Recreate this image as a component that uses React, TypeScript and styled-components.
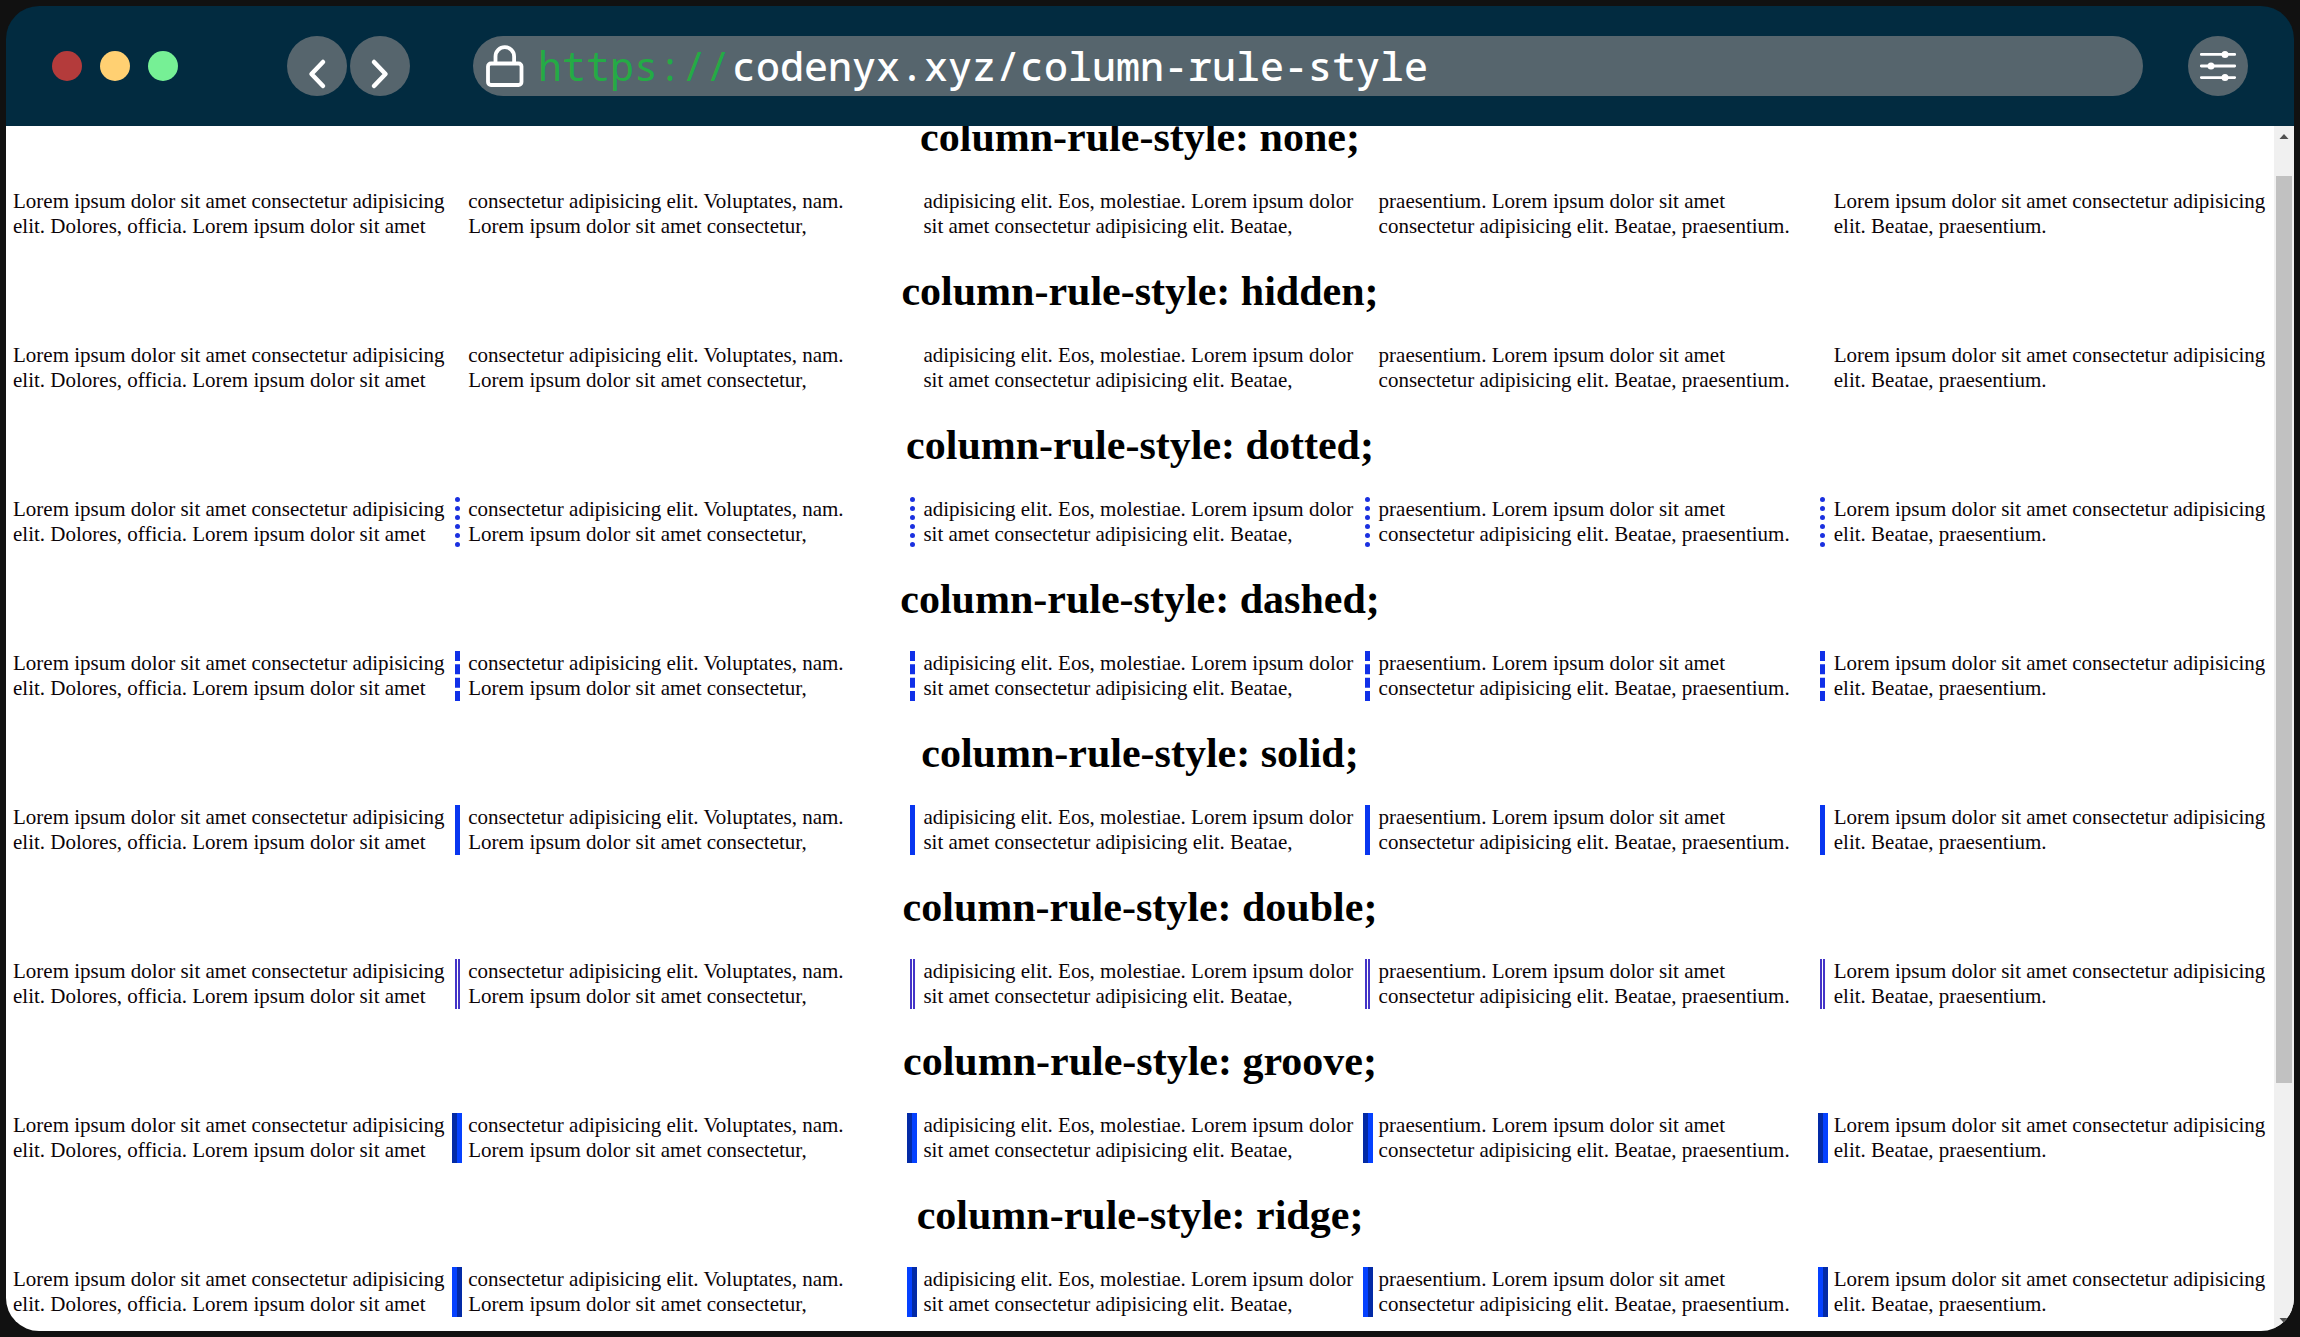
import React from "react";
import styled, { createGlobalStyle } from "styled-components";

const GlobalStyle = createGlobalStyle`
  *, *::before, *::after { box-sizing: border-box; }
  body { margin: 0; background: #111111; }
`;

const Shell = styled.div`
  height: 100vh;
  padding: 6px;
  background: #111111;
`;

const BrowserWindow = styled.div`
  display: flex;
  flex-direction: column;
  height: 100%;
`;

const Toolbar = styled.header`
  display: flex;
  align-items: center;
  flex: none;
  padding: 30px 46px;
  border-radius: 33px 33px 0 0;
  background: #022b40;
`;

const WindowControls = styled.div`
  display: flex;
  gap: 18px;
  margin-right: 109px;
`;

const WindowDot = styled.button<{ $color: string }>`
  width: 30px;
  height: 30px;
  padding: 0;
  border: 0;
  border-radius: 50%;
  background: ${({ $color }) => $color};
`;

const Navigation = styled.nav`
  display: flex;
  gap: 3px;
  margin-right: 63px;
`;

const RoundButton = styled.button`
  display: block;
  flex: none;
  width: 60px;
  height: 60px;
  padding: 0;
  border: 0;
  border-radius: 50%;
  background: #56656d;
  color: #ffffff;

  svg { display: block; }
`;

const AddressBar = styled.form`
  display: flex;
  align-items: center;
  flex: 1;
  min-width: 0;
  height: 60px;
  margin-right: 45px;
  padding: 0 30px 0 12px;
  border-radius: 30px;
  background: #56656d;
  font: 40px/60px "Noto Sans Mono", "DejaVu Sans Mono", monospace;
`;

const LockIcon = styled.svg`
  flex: none;
  margin-right: 13px;
`;

const Scheme = styled.label`
  color: #24ab45;
`;

const AddressInput = styled.input`
  flex: 1;
  min-width: 0;
  height: 60px;
  padding: 0 0 0 2px;
  border: 0;
  outline: 0;
  background: transparent;
  color: #ffffff;
  font: inherit;
  font-weight: 500;
`;

const Viewport = styled.div`
  display: flex;
  flex: 1;
  min-height: 0;
  overflow: hidden;
  border-radius: 0 0 33px 33px;
  background: #ffffff;
`;

const Page = styled.main`
  flex: 1;
  min-width: 0;
  overflow: hidden;
  padding: 0 7px;
  color: #0c0408;
  font: 21px/25px "Liberation Serif", "Times New Roman", serif;
`;

const Scrolled = styled.div`
  display: flow-root;
  margin-top: -41px;
`;

const Title = styled.h1`
  margin: 28px 0;
  color: #000000;
  font-size: 42px;
  line-height: 48px;
  text-align: center;
`;

const Columns = styled.div<{ $rule: string; $width: number; $color: string }>`
  column-count: 5;
  column-gap: 22px;
  column-rule: ${({ $width, $rule, $color }) => `${$width}px ${$rule} ${$color}`};
`;

const Scrollbar = styled.div`
  display: flex;
  flex-direction: column;
  flex: none;
  width: 20px;
  background: #f0f0f0;
`;

const ScrollButton = styled.button`
  flex: none;
  width: 20px;
  height: 20px;
  padding: 0;
  border: 0;
  background: transparent;
  color: #505050;

  svg { display: block; }
`;

const ScrollTrack = styled.div`
  display: grid;
  flex: 1;
  grid-template-rows: 30fr 907fr 228fr;
  padding: 0 2px;
`;

const ScrollThumb = styled.div`
  grid-row: 2;
  background: #c1c1c1;
`;

const samples = [
  { style: "none", width: 5, color: "#1a30e0" },
  { style: "hidden", width: 5, color: "#1a30e0" },
  { style: "dotted", width: 5, color: "#1a30e0" },
  { style: "dashed", width: 5, color: "#1030e8" },
  { style: "solid", width: 5, color: "#0836f0" },
  { style: "double", width: 5, color: "#4434c8" },
  { style: "groove", width: 10, color: "#0540fa" },
  { style: "ridge", width: 10, color: "#0540fa" },
];

const filler =
  "Lorem ipsum dolor sit amet consectetur adipisicing elit. Dolores, officia. " +
  "Lorem ipsum dolor sit amet consectetur adipisicing elit. Voluptates, nam. " +
  "Lorem ipsum dolor sit amet consectetur, adipisicing elit. Eos, molestiae. " +
  "Lorem ipsum dolor sit amet consectetur adipisicing elit. Beatae, praesentium. " +
  "Lorem ipsum dolor sit amet consectetur adipisicing elit. Beatae, praesentium. " +
  "Lorem ipsum dolor sit amet consectetur adipisicing elit. Beatae, praesentium.";

function Chevron({ points }: { points: string }) {
  return (
    <svg width="60" height="60" viewBox="0 0 60 60" fill="none" aria-hidden="true">
      <polyline
        points={points}
        stroke="currentColor"
        strokeWidth="4.5"
        strokeLinecap="round"
        strokeLinejoin="round"
      />
    </svg>
  );
}

export default function App() {
  return (
    <Shell>
      <GlobalStyle />
      <BrowserWindow>
        <Toolbar>
          <WindowControls>
            <WindowDot $color="#b43b3b" aria-label="Close" />
            <WindowDot $color="#ffd072" aria-label="Minimize" />
            <WindowDot $color="#76f095" aria-label="Maximize" />
          </WindowControls>
          <Navigation>
            <RoundButton aria-label="Back">
              <Chevron points="36,26 24.5,38 36,50" />
            </RoundButton>
            <RoundButton aria-label="Forward">
              <Chevron points="24,26 35.5,38 24,50" />
            </RoundButton>
          </Navigation>
          <AddressBar>
            <LockIcon width="40" height="42" viewBox="0 0 40 42" fill="none" aria-hidden="true">
              <g stroke="#ffffff" strokeWidth="3.8">
                <rect x="3" y="18.5" width="33.5" height="21.5" rx="3" />
                <path d="M10.5 18V11.5a9.3 9.3 0 0 1 18.6 0V18" />
              </g>
            </LockIcon>
            <Scheme htmlFor="address">https://</Scheme>
            <AddressInput id="address" defaultValue="codenyx.xyz/column-rule-style" spellCheck={false} />
          </AddressBar>
          <RoundButton aria-label="Settings">
            <svg width="60" height="60" viewBox="0 0 60 60" fill="#ffffff" aria-hidden="true">
              <path
                d="M13.3 18.4h33.4M13.3 30h33.4M13.3 41.6h33.4"
                stroke="#ffffff"
                strokeWidth="2.8"
                strokeLinecap="round"
              />
              <circle cx="37" cy="18.4" r="3.5" />
              <circle cx="23" cy="30" r="3.5" />
              <circle cx="37" cy="41.6" r="3.5" />
            </svg>
          </RoundButton>
        </Toolbar>
        <Viewport>
          <Page>
            <Scrolled>
              {samples.map(({ style, width, color }) => (
                <section key={style}>
                  <Title>column-rule-style: {style};</Title>
                  <Columns $rule={style} $width={width} $color={color}>
                    {filler}
                  </Columns>
                </section>
              ))}
            </Scrolled>
          </Page>
          <Scrollbar>
            <ScrollButton aria-label="Scroll up">
              <svg width="20" height="20" viewBox="0 0 20 20" aria-hidden="true">
                <path d="M5.5 13 10 8l4.500 5z" fill="currentColor" />
              </svg>
            </ScrollButton>
            <ScrollTrack>
              <ScrollThumb />
            </ScrollTrack>
            <ScrollButton aria-label="Scroll down">
              <svg width="20" height="20" viewBox="0 0 20 20" aria-hidden="true">
                <path d="M5.500 7 10 12l4.500-5z" fill="currentColor" />
              </svg>
            </ScrollButton>
          </Scrollbar>
        </Viewport>
      </BrowserWindow>
    </Shell>
  );
}
